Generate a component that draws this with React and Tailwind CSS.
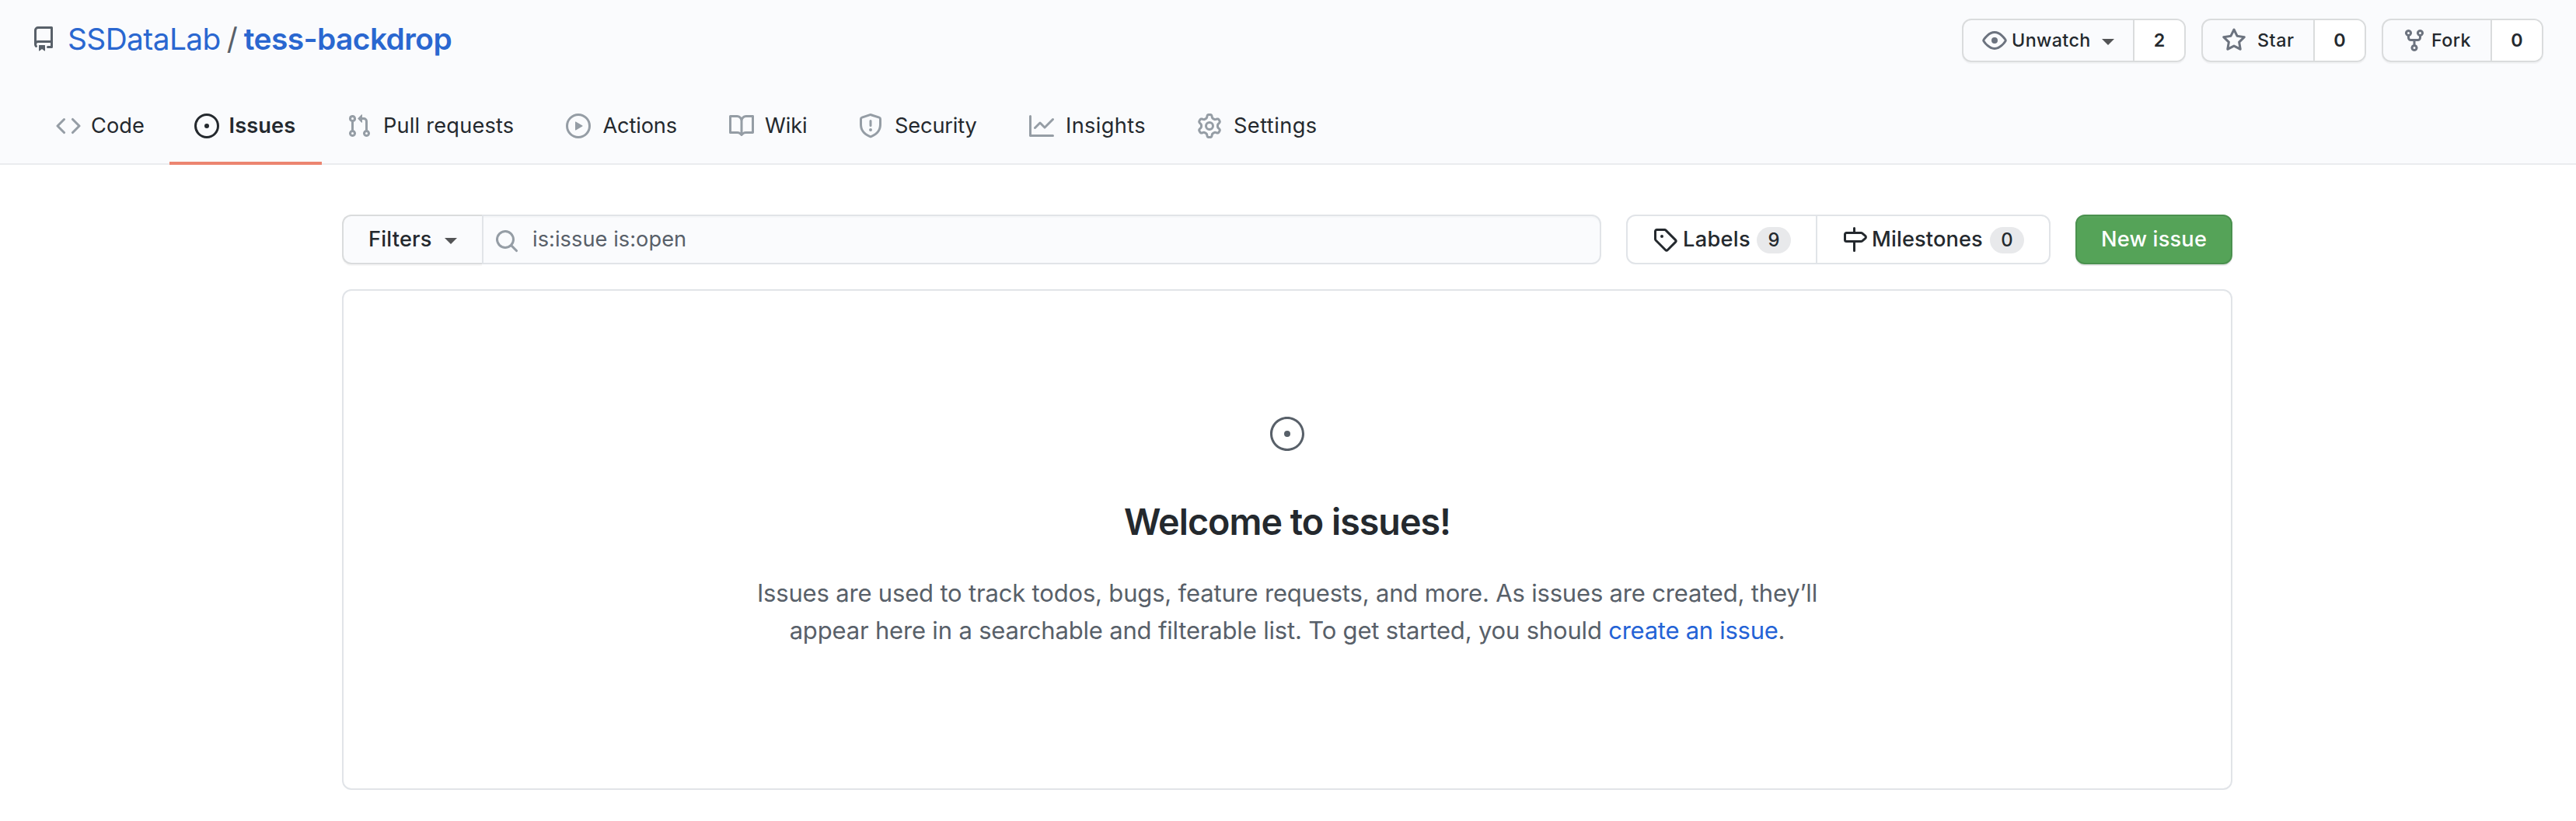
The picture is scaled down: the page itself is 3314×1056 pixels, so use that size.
import React from "react";

const paths = {
  repo: "M2 2.5A2.5 2.5 0 014.5 0h8.75a.75.75 0 01.75.75v12.5a.75.75 0 01-.75.75h-2.5a.75.75 0 110-1.5h1.75v-2h-8a1 1 0 00-.714 1.7.75.75 0 01-1.072 1.05A2.495 2.495 0 012 11.5v-9zm10.5-1V9h-8c-.356 0-.694.074-1 .208V2.5a1 1 0 011-1h8zM5 12.25v3.25a.25.25 0 00.4.2l1.45-1.087a.25.25 0 01.3 0L8.6 15.7a.25.25 0 00.4-.2v-3.25a.25.25 0 00-.25-.25h-3.5a.25.25 0 00-.25.25z",
  code: "M4.72 3.22a.75.75 0 011.06 1.06L2.06 8l3.72 3.72a.75.75 0 11-1.06 1.06L.47 8.53a.75.75 0 010-1.06l4.25-4.25zm6.56 0a.75.75 0 10-1.06 1.06L13.94 8l-3.72 3.72a.75.75 0 101.06 1.06l4.25-4.25a.75.75 0 000-1.06l-4.25-4.25z",
  issue: "M8 9.5a1.5 1.5 0 100-3 1.5 1.5 0 000 3zM8 0a8 8 0 100 16A8 8 0 008 0zM1.5 8a6.5 6.5 0 1113 0 6.5 6.5 0 01-13 0z",
  pull: "M7.177 3.073L9.573.677A.25.25 0 0110 .854v4.792a.25.25 0 01-.427.177L7.177 3.427a.25.25 0 010-.354zM3.75 2.5a.75.75 0 100 1.5.75.75 0 000-1.5zm-2.25.75a2.25 2.25 0 113 2.122v5.256a2.251 2.251 0 11-1.5 0V5.372A2.25 2.25 0 011.5 3.25zM11 2.5h-1V4h1a1 1 0 011 1v5.628a2.251 2.251 0 101.5 0V5A2.5 2.5 0 0011 2.5zm1 10.25a.75.75 0 111.5 0 .75.75 0 01-1.5 0zM3.75 12a.75.75 0 100 1.5.75.75 0 000-1.5z",
  play: "M1.5 8a6.5 6.5 0 1113 0 6.5 6.5 0 01-13 0zM8 0a8 8 0 100 16A8 8 0 008 0zM6.379 5.227A.25.25 0 006 5.442v5.117a.25.25 0 00.379.214l4.264-2.559a.25.25 0 000-.428L6.379 5.227z",
  book: "M0 1.75A.75.75 0 01.75 1h4.253c1.227 0 2.317.59 3 1.501A3.744 3.744 0 0111.006 1h4.245a.75.75 0 01.75.75v10.5a.75.75 0 01-.75.75h-4.507a2.25 2.25 0 00-1.591.659l-.622.621a.75.75 0 01-1.06 0l-.622-.621A2.25 2.25 0 005.258 13H.75a.75.75 0 01-.75-.75V1.75zm8.755 3a2.25 2.25 0 012.25-2.25H14.5v9h-3.757c-.71 0-1.4.201-1.992.572l.004-7.322zm-1.504 7.324l.004-5.073-.002-2.253A2.25 2.25 0 005.003 2.5H1.5v9h3.757a3.75 3.75 0 011.994.574z",
  shield: "M7.467.133a1.75 1.75 0 011.066 0l5.25 1.68A1.75 1.75 0 0115 3.48V7c0 1.566-.32 3.182-1.303 4.682-.983 1.498-2.585 2.813-5.032 3.855a1.7 1.7 0 01-1.33 0c-2.447-1.042-4.049-2.357-5.032-3.855C1.32 10.182 1 8.566 1 7V3.48a1.75 1.75 0 011.217-1.667l5.25-1.68zm.61 1.429a.25.25 0 00-.153 0l-5.25 1.68a.25.25 0 00-.174.238V7c0 1.358.275 2.666 1.057 3.86.784 1.194 2.121 2.34 4.366 3.297a.2.2 0 00.154 0c2.245-.956 3.582-2.104 4.366-3.298C13.225 9.666 13.5 8.36 13.5 7V3.48a.25.25 0 00-.174-.237l-5.25-1.68zM9 10.5a1 1 0 11-2 0 1 1 0 012 0zm-.25-5.75a.75.75 0 10-1.5 0v3a.75.75 0 001.5 0v-3z",
  graph: "M1.5 1.75a.75.75 0 00-1.5 0v12.5c0 .414.336.75.75.75h14.5a.75.75 0 000-1.5H1.5V1.75zm14.28 2.53a.75.75 0 00-1.06-1.06L10 7.94 7.53 5.47a.75.75 0 00-1.06 0L3.22 8.72a.75.75 0 001.06 1.06L7 7.06l2.47 2.47a.75.75 0 001.06 0l5.25-5.25z",
  gear: "M7.429 1.525a6.593 6.593 0 011.142 0c.036.003.108.036.137.146l.289 1.105c.147.56.55.967.997 1.189.174.086.341.183.501.29.417.278.97.423 1.53.27l1.102-.303c.11-.03.175.016.195.046.219.31.41.641.573.989.014.031.022.11-.059.19l-.815.806c-.411.406-.562.957-.53 1.456a4.588 4.588 0 010 .582c-.032.499.119 1.05.53 1.456l.815.806c.08.08.073.159.059.19a6.494 6.494 0 01-.573.99c-.02.029-.086.074-.195.045l-1.103-.303c-.559-.153-1.112-.008-1.529.27-.16.107-.327.204-.5.29-.449.222-.851.628-.998 1.189l-.289 1.105c-.029.11-.101.143-.137.146a6.613 6.613 0 01-1.142 0c-.036-.003-.108-.037-.137-.146l-.289-1.105c-.147-.56-.55-.967-.997-1.189a4.502 4.502 0 01-.501-.29c-.417-.278-.97-.423-1.53-.27l-1.102.303c-.11.03-.175-.016-.195-.046a6.492 6.492 0 01-.573-.989c-.014-.031-.022-.11.059-.19l.815-.806c.411-.406.562-.957.53-1.456a4.587 4.587 0 010-.582c.032-.499-.119-1.05-.53-1.456l-.815-.806c-.08-.08-.073-.159-.059-.19a6.44 6.44 0 01.573-.99c.02-.029.086-.075.195-.045l1.103.303c.559.153 1.112.008 1.529-.27.16-.107.327-.204.5-.29.449-.222.851-.628.998-1.189l.289-1.105c.029-.11.101-.143.137-.146zM8 0c-.236 0-.47.01-.701.03-.743.065-1.29.615-1.458 1.261l-.29 1.106c-.017.066-.078.158-.211.224a5.994 5.994 0 00-.668.386c-.123.082-.233.09-.3.071L3.27 2.776c-.644-.177-1.392.02-1.82.63a7.977 7.977 0 00-.704 1.217c-.315.675-.111 1.422.363 1.891l.815.806c.05.048.098.147.088.294a6.084 6.084 0 000 .772c.01.147-.038.246-.088.294l-.815.806c-.474.469-.678 1.216-.363 1.891.2.428.436.835.704 1.218.428.609 1.176.806 1.82.63l1.103-.303c.066-.019.176-.011.299.071.213.143.436.272.668.386.133.066.194.158.212.224l.289 1.106c.169.646.715 1.196 1.458 1.26a8.094 8.094 0 001.402 0c.743-.064 1.29-.614 1.458-1.26l.29-1.106c.017-.066.078-.158.211-.224a5.98 5.98 0 00.668-.386c.123-.082.233-.09.3-.071l1.102.302c.644.177 1.392-.02 1.82-.63.268-.382.505-.789.704-1.217.315-.675.111-1.422-.364-1.891l-.814-.806c-.05-.048-.098-.147-.088-.294a6.1 6.1 0 000-.772c-.01-.147.039-.246.088-.294l.814-.806c.475-.469.679-1.216.364-1.891a7.992 7.992 0 00-.704-1.218c-.428-.609-1.176-.806-1.82-.63l-1.103.303c-.066.019-.176.011-.299-.071a5.991 5.991 0 00-.668-.386c-.133-.066-.194-.158-.212-.224L10.16 1.29C9.99.645 9.444.095 8.701.031A8.094 8.094 0 008 0zm1.5 8a1.5 1.5 0 11-3 0 1.5 1.5 0 013 0zM11 8a3 3 0 11-6 0 3 3 0 016 0z",
  eye: "M1.679 7.932c.412-.621 1.242-1.75 2.366-2.717C5.175 4.242 6.527 3.5 8 3.5c1.473 0 2.824.742 3.955 1.715 1.124.967 1.954 2.096 2.366 2.717a.119.119 0 010 .136c-.412.621-1.242 1.75-2.366 2.717C10.825 11.758 9.473 12.5 8 12.5c-1.473 0-2.824-.742-3.955-1.715C2.92 9.818 2.09 8.69 1.679 8.068a.119.119 0 010-.136zM8 2c-1.981 0-3.67.992-4.933 2.078C1.797 5.169.88 6.423.43 7.1a1.619 1.619 0 000 1.798c.45.678 1.367 1.932 2.637 3.024C4.329 13.008 6.019 14 8 14c1.981 0 3.67-.992 4.933-2.078 1.27-1.091 2.187-2.345 2.637-3.023a1.619 1.619 0 000-1.798c-.45-.678-1.367-1.932-2.637-3.023C11.671 2.992 9.981 2 8 2zm0 8a2 2 0 100-4 2 2 0 000 4z",
  star: "M8 .25a.75.75 0 01.673.418l1.882 3.815 4.21.612a.75.75 0 01.416 1.279l-3.046 2.97.719 4.192a.75.75 0 01-1.088.791L8 12.347l-3.766 1.98a.75.75 0 01-1.088-.79l.72-4.194L.818 6.374a.75.75 0 01.416-1.28l4.21-.611L7.327.668A.75.75 0 018 .25zm0 2.445L6.615 5.5a.75.75 0 01-.564.41l-3.097.45 2.24 2.184a.75.75 0 01.216.664l-.528 3.084 2.769-1.456a.75.75 0 01.698 0l2.77 1.456-.53-3.084a.75.75 0 01.216-.664l2.24-2.183-3.096-.45a.75.75 0 01-.564-.41L8 2.694v.001z",
  fork: "M5 3.25a.75.75 0 11-1.5 0 .75.75 0 011.5 0zm0 2.122a2.25 2.25 0 10-1.5 0v.878A2.25 2.25 0 005.75 8.5h1.5v2.128a2.251 2.251 0 101.5 0V8.5h1.5a2.25 2.25 0 002.25-2.25v-.878a2.25 2.25 0 10-1.5 0v.878a.75.75 0 01-.75.75h-4.5A.75.75 0 015 6.25v-.878zm3.75 7.378a.75.75 0 11-1.5 0 .75.75 0 011.5 0zm3-8.75a.75.75 0 100-1.5.75.75 0 000 1.5z",
  search: "M11.5 7a4.499 4.499 0 11-8.998 0A4.499 4.499 0 0111.5 7zm-.82 4.74a6 6 0 111.06-1.06l3.04 3.04a.75.75 0 11-1.06 1.06l-3.04-3.04z",
  tag: "M2.5 7.775V2.75a.25.25 0 01.25-.25h5.025a.25.25 0 01.177.073l6.25 6.25a.25.25 0 010 .354l-5.025 5.025a.25.25 0 01-.354 0l-6.25-6.25a.25.25 0 01-.073-.177zm-1.5 0V2.75C1 1.784 1.784 1 2.75 1h5.025c.464 0 .91.184 1.238.513l6.25 6.25a1.75 1.75 0 010 2.474l-5.026 5.026a1.75 1.75 0 01-2.474 0l-6.25-6.25A1.75 1.75 0 011 7.775zM6 5a1 1 0 100 2 1 1 0 000-2z",
  milestone: "M7.75 0a.75.75 0 01.75.75V3h3.634c.414 0 .814.147 1.13.414l2.07 1.75a1.75 1.75 0 010 2.672l-2.07 1.75a1.75 1.75 0 01-1.13.414H8.5v5.25a.75.75 0 11-1.5 0V10H2.75A1.75 1.75 0 011 8.25v-3.5C1 3.784 1.784 3 2.75 3H7V.75A.75.75 0 017.75 0zm0 8.5h4.384a.25.25 0 00.161-.06l2.07-1.75a.25.25 0 000-.38l-2.07-1.75a.25.25 0 00-.161-.06H2.75a.25.25 0 00-.25.25v3.5c0 .138.112.25.25.25h5z",
};

function Icon({ name, className = "" }) {
  return (
    <svg viewBox="0 0 16 16" className={`size-8 shrink-0 ${className}`} fill="currentColor" fillRule="evenodd" aria-hidden="true">
      <path d={paths[name]} />
    </svg>
  );
}

function Caret({ className = "" }) {
  return <span className={`size-0 shrink-0 border-x-8 border-t-8 border-x-transparent border-t-[#535456] ${className}`} />;
}

const tabs = [
  { label: "Code", icon: "code", width: "w-[178px]", text: "ml-[13px] tracking-[0.06px]" },
  { label: "Issues", icon: "issue", width: "w-[196px]", text: "ml-[12.5px] tracking-[0.12px]", active: true },
  { label: "Pull requests", icon: "pull", width: "w-[282px]", text: "ml-[15px] tracking-[0.2px]" },
  { label: "Actions", icon: "play", width: "w-[210px]", text: "ml-[15.5px] tracking-[-0.14px]" },
  { label: "Wiki", icon: "book", width: "w-[166px]", text: "ml-3.5 tracking-[-0.06px]" },
  { label: "Security", icon: "shield", width: "w-[220px]", text: "ml-[15px] tracking-[-0.15px]" },
  { label: "Insights", icon: "graph", width: "w-[216px]", text: "ml-[15px] tracking-[0.37px]" },
  { label: "Settings", icon: "gear", width: "w-[218px]", text: "ml-[15px] tracking-[0.43px]" },
];

const actions = [
  { label: "Unwatch", icon: "eye", count: 2, width: "w-[288px]", text: "ml-1.5 tracking-[0.38px]", caret: true },
  { label: "Star", icon: "star", count: 0, width: "w-[212px]", text: "ml-3.5 tracking-[0.55px]" },
  { label: "Fork", icon: "fork", count: 0, width: "w-[208px]", text: "ml-1.5 tracking-[0.42px]" },
];

function RepoHeader() {
  return (
    <header className="bg-[#fafbfd]">
      <div className="flex h-28 items-start justify-between pr-[42px] pl-10">
        <h1 className="flex items-center pt-[30px] text-[38.8px] leading-10 text-[#2a67d0]">
          <Icon name="repo" className="text-[#586069]" />
          <a className="ml-[15px] tracking-[-0.56px]">SSDataLab</a>
          <span className="ml-2 text-[#586069]">/</span>
          <a className="ml-2 font-semibold tracking-[-0.52px]">tess-backdrop</a>
        </h1>
        <ul className="flex gap-5 pt-6">
          {actions.map((a) => (
            <li key={a.label} className={`flex h-14 overflow-hidden rounded-xl border-2 border-[#dadcdd] text-[23.3px] shadow-[0_2px_0_rgba(27,31,35,0.04)] ${a.width}`}>
              <button className="flex grow items-center pl-6 font-medium">
                <Icon name={a.icon} className="text-[#6c737f]" />
                <span className={a.text}>{a.label}</span>
                {a.caret && <Caret className="ml-[14px] mt-1" />}
              </button>
              <a className="flex w-[66px] items-center justify-center border-l-2 border-[#dadcdd] bg-white font-semibold">{a.count}</a>
            </li>
          ))}
        </ul>
      </div>
      <nav className="flex h-[100px] pl-10 shadow-[inset_0_-2px_0_#eaecef]">
        {tabs.map((t) => (
          <a key={t.label} className={`flex items-center border-y-4 border-t-transparent px-8 text-[27.2px] whitespace-nowrap ${t.width} ${t.active ? "border-b-[#ec8570] font-semibold" : "border-b-transparent"}`}>
            <Icon name={t.icon} className={t.active ? "" : "text-[#959da5]"} />
            <span className={`pt-px ${t.text}`}>{t.label}</span>
          </a>
        ))}
      </nav>
    </header>
  );
}

function Pill({ children, className }) {
  return <span className={`mt-0.5 flex h-[34px] w-11 items-center justify-center rounded-full bg-[#e8e9eb] text-[23.8px] ${className}`}>{children}</span>;
}

function Subnav() {
  return (
    <div className="flex h-16 gap-8 text-[27.2px]">
      <div className="flex w-[1620px]">
        <button className="flex w-[180px] items-center rounded-l-xl border-2 border-r-0 border-[#dadcdd] bg-[#fafbfd] pl-8 font-medium shadow-[0_2px_0_rgba(27,31,35,0.04)]">
          <span className="pt-px tracking-[0.2px]">Filters</span>
          <Caret className="ml-4 mt-1" />
        </button>
        <div className="flex grow items-center rounded-r-xl border-2 border-[#e1e4e8] bg-[#fafbfd] pl-3.5 text-[#586069] shadow-[inset_0_2px_0_rgba(225,228,232,0.2)]">
          <Icon name="search" className="mt-1 text-[#959da5]" />
          <span className="ml-[17px] pt-px tracking-[0.06px]">is:issue is:open</span>
        </div>
      </div>
      <div className="flex w-[546px] rounded-xl border-2 border-[#e1e4e8] font-medium">
        <a className="flex w-[244px] items-center border-r-2 border-[#e1e4e8] pl-8">
          <Icon name="tag" />
          <span className="ml-[7px] pt-px tracking-[0.31px]">Labels</span>
          <Pill className="ml-2">9</Pill>
        </a>
        <a className="flex grow items-center pl-8">
          <Icon name="milestone" />
          <span className="ml-1.5 pt-px tracking-[0.13px]">Milestones</span>
          <Pill className="ml-[9px]">0</Pill>
        </a>
      </div>
      <button className="w-[202px] rounded-xl border-2 border-[#4b914f] bg-[#55a358] pt-px font-medium tracking-[0.2px] text-white shadow-[0_2px_0_rgba(27,31,35,0.1),inset_0_2px_0_rgba(255,255,255,0.03)]">New issue</button>
    </div>
  );
}

function EmptyState() {
  return (
    <section className="mt-8 flex h-[644px] flex-col items-center rounded-xl border-2 border-[#e1e4e8] pt-40">
      <svg viewBox="0 0 24 24" className="size-12 text-[#586069]" fill="currentColor" fillRule="evenodd" aria-hidden="true">
        <path d="M12 1C5.925 1 1 5.925 1 12s4.925 11 11 11 11-4.925 11-11S18.075 1 12 1zM2.5 12a9.5 9.5 0 1119 0 9.5 9.5 0 01-19 0zM12 14a2 2 0 100-4 2 2 0 000 4z" />
      </svg>
      <h2 className="mt-[59px] text-[46.6px] leading-[60px] font-semibold tracking-[-0.98px]">Welcome to issues!</h2>
      <p className="mt-[38px] text-center text-[31px] leading-[48px] tracking-[-0.18px] whitespace-nowrap text-[#586069]">
        Issues are used to track todos, bugs, feature requests, and more. As issues are created, they’ll
        <br />
        appear here in a searchable and filterable list. To get started, you should <a className="tracking-[-0.27px] text-[#2463d6]">create an issue</a>.
      </p>
    </section>
  );
}

export default function App() {
  return (
    <div className="min-h-screen bg-white font-['Inter',sans-serif] text-[#24292e]">
      <RepoHeader />
      <main className="w-[2872px] pt-16 pl-[440px]">
        <Subnav />
        <EmptyState />
      </main>
    </div>
  );
}
